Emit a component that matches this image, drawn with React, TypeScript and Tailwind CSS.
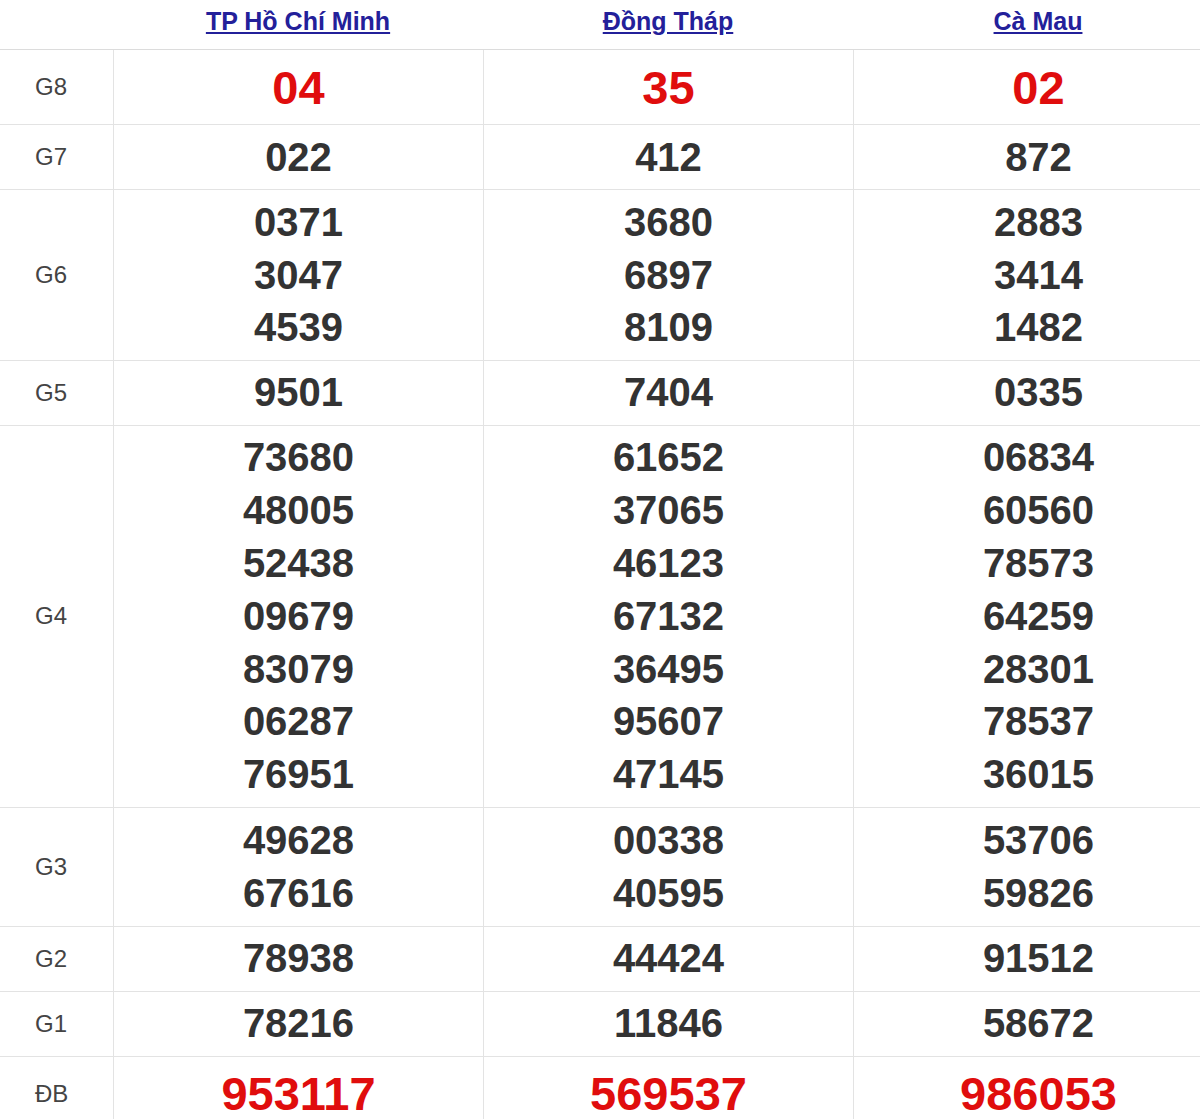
const provinces = ["TP Hồ Chí Minh", "Đồng Tháp", "Cà Mau"];

type Prize = { label: string; values: string[][]; big?: boolean };

const prizes: Prize[] = [
  { label: "G8", values: [["04"], ["35"], ["02"]], big: true },
  { label: "G7", values: [["022"], ["412"], ["872"]] },
  {
    label: "G6",
    values: [
      ["0371", "3047", "4539"],
      ["3680", "6897", "8109"],
      ["2883", "3414", "1482"],
    ],
  },
  { label: "G5", values: [["9501"], ["7404"], ["0335"]] },
  {
    label: "G4",
    values: [
      ["73680", "48005", "52438", "09679", "83079", "06287", "76951"],
      ["61652", "37065", "46123", "67132", "36495", "95607", "47145"],
      ["06834", "60560", "78573", "64259", "28301", "78537", "36015"],
    ],
  },
  {
    label: "G3",
    values: [
      ["49628", "67616"],
      ["00338", "40595"],
      ["53706", "59826"],
    ],
  },
  { label: "G2", values: [["78938"], ["44424"], ["91512"]] },
  { label: "G1", values: [["78216"], ["11846"], ["58672"]] },
  { label: "ĐB", values: [["953117"], ["569537"], ["986053"]], big: true },
];

function PrizeRow({ prize }: { prize: Prize }) {
  // G3 sits a touch taller in the original
  const pad = prize.label === "G3" ? "py-[6.4px]" : "py-[5.6px]";
  return (
    <div className="grid grid-cols-[113px_370px_370px_370px] border-b border-[#e3e3e3]">
      <div className="flex items-center pl-[35px] text-[24px] text-[#444]">{prize.label}</div>
      {prize.values.map((col, i) => (
        <div
          key={i}
          className={`flex flex-col items-center justify-center border-l border-[#e3e3e3] ${pad}`}
        >
          {col.map((v, j) =>
            prize.big ? (
              <span key={j} className="text-[47px] font-bold leading-[63px] text-[#e00d0d]">
                {v}
              </span>
            ) : (
              <span key={j} className="text-[40px] font-bold leading-[52.8px] text-[#333]">
                {v}
              </span>
            )
          )}
        </div>
      ))}
    </div>
  );
}

export default function App() {
  return (
    <div className="w-[1200px] overflow-hidden bg-white font-['Liberation_Sans',Arial,sans-serif]">
      <div className="w-[1223px]">
        <div className="grid h-[50px] grid-cols-[113px_370px_370px_370px] border-b border-[#dcdcdc]">
          <div />
          {provinces.map((p) => (
            <div key={p} className="flex justify-center pt-[1px]">
              <a href="#" className="text-[25px] font-bold leading-[40px] text-[#23209a] underline">
                {p}
              </a>
            </div>
          ))}
        </div>
        {prizes.map((p) => (
          <PrizeRow key={p.label} prize={p} />
        ))}
      </div>
    </div>
  );
}
